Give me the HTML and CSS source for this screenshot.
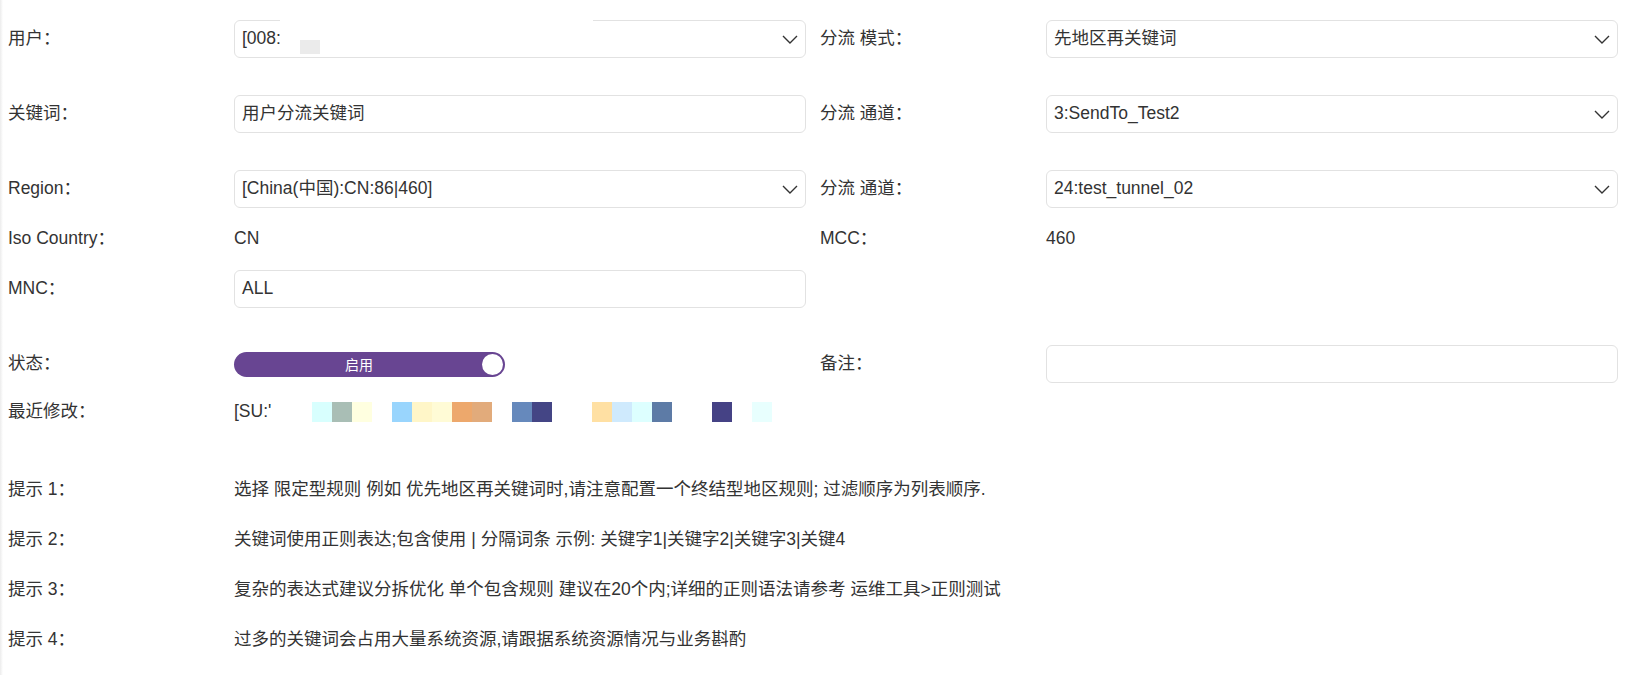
FILE: index.html
```html
<!DOCTYPE html>
<html lang="zh-CN">

<head>
    <meta charset="UTF-8">
    <meta name="viewport" content="width=device-width, initial-scale=1.0">
    <title>用户分流规则</title>
    <link rel="stylesheet" href="styles.css">
</head>

<body>
    <div class="page">
        <div class="row spaced">
            <div class="field">
                <div class="label">用户：</div>
                <div class="control">
                    <div class="select">
                        <span class="select-text">[008:</span>
                        <svg class="chevron" width="16" height="9" viewBox="0 0 16 9"><polyline points="1,1 8,8 15,1" /></svg>
                        <div class="mask"></div>
                    </div>
                </div>
            </div>
            <div class="field">
                <div class="label">分流 模式：</div>
                <div class="control">
                    <div class="select">
                        <span class="select-text">先地区再关键词</span>
                        <svg class="chevron" width="16" height="9" viewBox="0 0 16 9"><polyline points="1,1 8,8 15,1" /></svg>
                    </div>
                </div>
            </div>
        </div>

        <div class="row spaced">
            <div class="field">
                <div class="label">关键词：</div>
                <div class="control">
                    <div class="input"><span class="select-text">用户分流关键词</span></div>
                </div>
            </div>
            <div class="field">
                <div class="label">分流 通道：</div>
                <div class="control">
                    <div class="select">
                        <span class="select-text">3:SendTo_Test2</span>
                        <svg class="chevron" width="16" height="9" viewBox="0 0 16 9"><polyline points="1,1 8,8 15,1" /></svg>
                    </div>
                </div>
            </div>
        </div>

        <div class="row">
            <div class="field">
                <div class="label">Region：</div>
                <div class="control">
                    <div class="select">
                        <span class="select-text">[China(中国):CN:86|460]</span>
                        <svg class="chevron" width="16" height="9" viewBox="0 0 16 9"><polyline points="1,1 8,8 15,1" /></svg>
                    </div>
                </div>
            </div>
            <div class="field">
                <div class="label">分流 通道：</div>
                <div class="control">
                    <div class="select">
                        <span class="select-text">24:test_tunnel_02</span>
                        <svg class="chevron" width="16" height="9" viewBox="0 0 16 9"><polyline points="1,1 8,8 15,1" /></svg>
                    </div>
                </div>
            </div>
        </div>

        <div class="row">
            <div class="field">
                <div class="label">Iso Country：</div>
                <div class="control"><span class="value">CN</span></div>
            </div>
            <div class="field">
                <div class="label">MCC：</div>
                <div class="control"><span class="value">460</span></div>
            </div>
        </div>

        <div class="row spaced">
            <div class="field">
                <div class="label">MNC：</div>
                <div class="control">
                    <div class="input"><span class="select-text">ALL</span></div>
                </div>
            </div>
            <div class="field"></div>
        </div>

        <div class="row">
            <div class="field">
                <div class="label">状态：</div>
                <div class="control">
                    <div class="switch">
                        <span class="switch-text">启用</span>
                        <span class="knob"></span>
                    </div>
                </div>
            </div>
            <div class="field">
                <div class="label">备注：</div>
                <div class="control">
                    <div class="input"></div>
                </div>
            </div>
        </div>

        <div class="row short">
            <div class="field">
                <div class="label">最近修改：</div>
                <div class="control">
                    <span class="modifier">[SU:'</span>
                    <div class="mosaic">
                        <span class="px c1"></span><span class="px c2"></span><span class="px c3"></span><span class="px"></span>
                        <span class="px c4"></span><span class="px c5"></span><span class="px c6"></span><span class="px c7"></span><span class="px c8"></span><span class="px"></span>
                        <span class="px c9"></span><span class="px c10"></span><span class="px"></span><span class="px"></span>
                        <span class="px c11"></span><span class="px c12"></span><span class="px c13"></span><span class="px c14"></span><span class="px"></span><span class="px"></span>
                        <span class="px c15"></span><span class="px"></span><span class="px c16"></span>
                    </div>
                </div>
            </div>
            <div class="field"></div>
        </div>

        <div class="tips">
            <div class="row">
                <div class="label">提示 1：</div>
                <div class="tip">选择 限定型规则 例如 优先地区再关键词时,请注意配置一个终结型地区规则; 过滤顺序为列表顺序.</div>
            </div>
            <div class="row">
                <div class="label">提示 2：</div>
                <div class="tip">关键词使用正则表达;包含使用 | 分隔词条 示例: 关键字1|关键字2|关键字3|关键4</div>
            </div>
            <div class="row">
                <div class="label">提示 3：</div>
                <div class="tip">复杂的表达式建议分拆优化 单个包含规则 建议在20个内;详细的正则语法请参考 运维工具&gt;正则测试</div>
            </div>
            <div class="row">
                <div class="label">提示 4：</div>
                <div class="tip">过多的关键词会占用大量系统资源,请跟据系统资源情况与业务斟酌</div>
            </div>
        </div>
    </div>
</body>

</html>
```

FILE: styles.css
```css
body {
    margin: 0;
    font-family: "Liberation Sans", "Noto Sans CJK SC", sans-serif;
    font-size: 17.5px;
    color: #333;
    background: linear-gradient(to right, #ececec, #ffffff 3px);
}

.page {
    padding: 14px 0 0 8px;
    width: 1610px;
}

.row {
    display: flex;
    align-items: center;
    gap: 14px;
    height: 50px;
}

.row.spaced {
    margin-bottom: 25px;
}

.row.short {
    height: 46px;
}

.field {
    display: flex;
    align-items: center;
    width: 798px;
    height: 100%;
}

/* text sits a touch above the box centre, like the original */
.label,
.value,
.tip,
.select-text,
.modifier {
    line-height: 20px;
    padding-bottom: 3px;
}

.label {
    width: 226px;
    flex-shrink: 0;
}

.control {
    flex: 1;
    display: flex;
    align-items: center;
}

.select,
.input {
    position: relative;
    box-sizing: border-box;
    width: 100%;
    height: 38px;
    padding: 0 7px;
    border: 1px solid #e2e2e2;
    border-radius: 6px;
    display: flex;
    align-items: center;
    background: #fff;
}

.select-text {
    flex: 1;
}

.chevron {
    fill: none;
    stroke: #333;
    stroke-width: 1.4;
}

/* redacted block over the user name */
.mask {
    position: absolute;
    left: 45px;
    top: -3px;
    width: 313px;
    height: 35px;
    background: #fff;
}

.mask::after {
    content: "";
    position: absolute;
    left: 20px;
    top: 22px;
    width: 20px;
    height: 14px;
    background: #ebebeb;
}

.switch {
    position: relative;
    box-sizing: border-box;
    width: 271px;
    height: 25px;
    padding-right: 21px;
    border-radius: 13px;
    background-color: #684592;
    color: #fff;
    font-size: 14px;
    display: flex;
    align-items: center;
    justify-content: center;
}

.knob {
    position: absolute;
    right: 2px;
    top: 2px;
    width: 21px;
    height: 21px;
    border-radius: 50%;
    background: #fff;
}

.modifier {
    width: 78px;
    flex-shrink: 0;
    overflow: hidden;
    white-space: nowrap;
}

.mosaic {
    display: flex;
}

.px {
    width: 20px;
    height: 20px;
}

.c1 { background: #d8fffe; }
.c2 { background: #a9beb5; }
.c3 { background: #ffffe0; }
.c4 { background: #99d5fd; }
.c5 { background: #fff6c8; }
.c6 { background: #fffbd6; }
.c7 { background: #eda86c; }
.c8 { background: #e2ab7b; }
.c9 { background: #6689bc; }
.c10 { background: #444585; }
.c11 { background: #ffe0a3; }
.c12 { background: #cfeafd; }
.c13 { background: #ddffff; }
.c14 { background: #5d7ba6; }
.c15 { background: #454285; }
.c16 { background: #e8fffe; }

.tips {
    margin-top: 30px;
}

.tips .row {
    gap: 0;
}

.tip {
    white-space: nowrap;
}
```
